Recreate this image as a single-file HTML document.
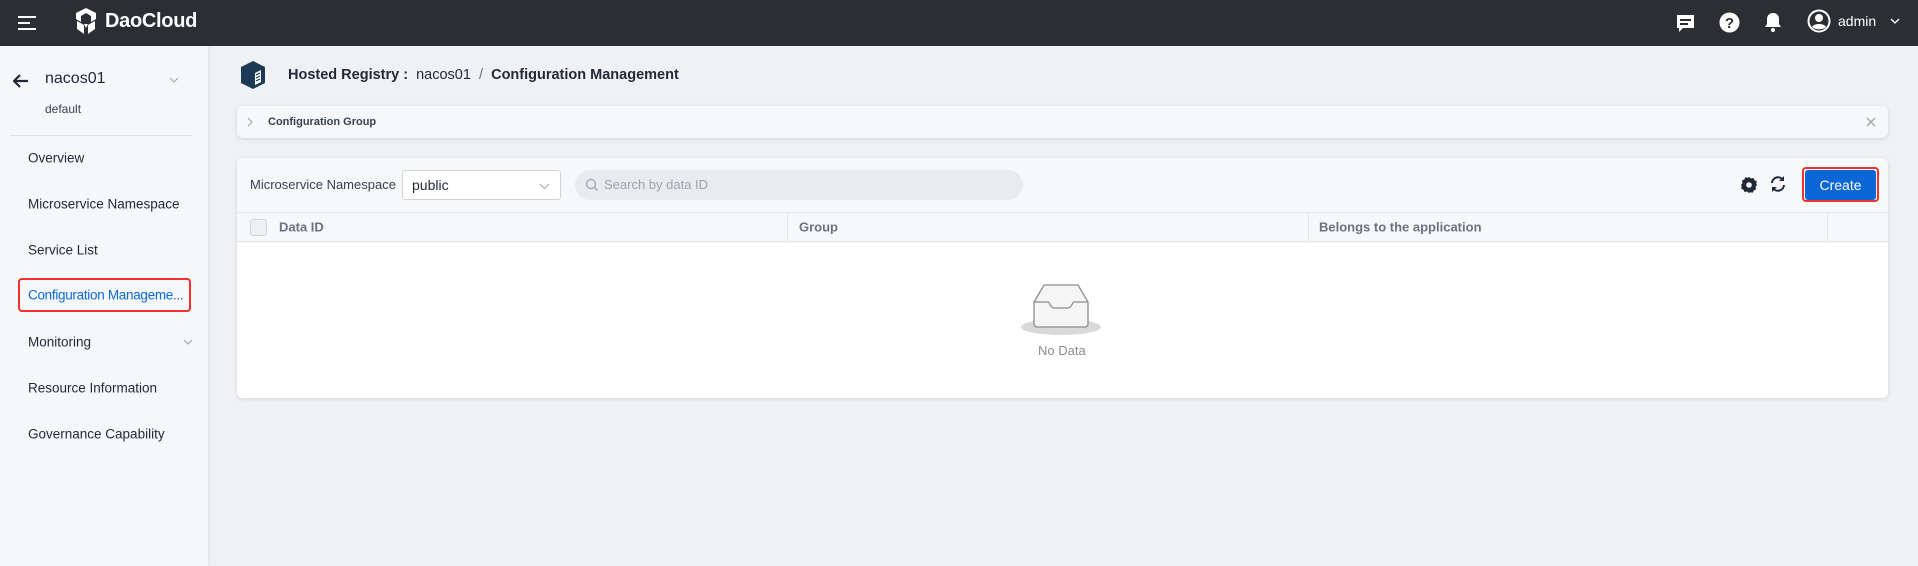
<!DOCTYPE html>
<html><head><meta charset="utf-8"><style>
*{box-sizing:border-box;margin:0;padding:0}
body{width:1918px;height:566px;overflow:hidden;background:#eff1f5;font-family:"Liberation Sans",sans-serif;position:relative;color:#1f2937}
.abs{position:absolute}
.top{left:0;top:0;width:1918px;height:46px;background:#2b2e33}
.side{left:0;top:46px;width:208px;height:520px;background:#f5f7fa;box-shadow:1px 0 3px rgba(0,0,0,.08)}
.mi{position:absolute;left:28px;font-size:13.5px;color:#1f2937;transform:translateY(-50%);white-space:nowrap}
.card{background:#f7f8fa;border-radius:6px;box-shadow:0 1px 4px rgba(0,0,0,.12)}
.th{position:absolute;top:227px;transform:translateY(-50%);font-size:13px;color:#6b7280;font-weight:bold}
</style></head><body>
<div class="abs top">
  <svg class="abs" style="left:18px;top:15px" width="20" height="16"><path d="M0 2h18M0 8h12M0 14h18" stroke="#fff" stroke-width="2"/></svg>
  <svg class="abs" style="left:71px;top:7px" width="30" height="28" viewBox="0 0 24 28"><path d="M12 1 2 6v6l5 3V9l5-3 5 3v6l5-3V6z M3 14l7 4v9l-7-5z M21 14l-7 4v9l7-5z" fill="#fff"/><path d="M10 17l2 4 2-4z" fill="#fff"/></svg>
  <div class="abs" style="left:105px;top:10px;font-size:20px;font-weight:bold;color:#fff;letter-spacing:-0.3px">DaoCloud</div>
  <svg class="abs" style="left:1675px;top:13px" width="21" height="21"><path d="M2 2h17v13H8l-4 4v-4H2z" fill="#fff"/><path d="M5 7h11M5 11h8" stroke="#2b2e33" stroke-width="2"/></svg>
  <svg class="abs" style="left:1719px;top:12px" width="21" height="21"><circle cx="10.5" cy="10.5" r="10" fill="#fff"/><text x="10.5" y="16" text-anchor="middle" font-size="15" font-weight="bold" fill="#2b2e33" font-family="Liberation Sans">?</text></svg>
  <svg class="abs" style="left:1763px;top:11px" width="20" height="22"><path d="M10 2c-4 0-6 3-6 6v5l-2 3h16l-2-3V8c0-3-2-6-6-6z" fill="#fff"/><circle cx="10" cy="19" r="2" fill="#fff"/></svg>
  <svg class="abs" style="left:1807px;top:9px" width="24" height="24"><circle cx="12" cy="12" r="10.5" fill="none" stroke="#fff" stroke-width="2"/><circle cx="12" cy="9" r="4" fill="#fff"/><path d="M5 18c2-4 12-4 14 0-3 3-11 3-14 0z" fill="#fff"/></svg>
  <div class="abs" style="left:1838px;top:13px;font-size:14px;color:#fff">admin</div>
  <svg class="abs" style="left:1890px;top:17px" width="10" height="8"><path d="M1 2l4 4 4-4" stroke="#fff" fill="none" stroke-width="1.3"/></svg>
</div>
<div class="abs side">
  <svg class="abs" style="left:13px;top:28px" width="16" height="14"><path d="M15 7H2M7 1 1 7l6 6" stroke="#1f2937" stroke-width="2.2" fill="none"/></svg>
  <div class="abs" style="left:45px;top:24px;font-size:16px">nacos01</div>
  <svg class="abs" style="left:169px;top:31px" width="10" height="7"><path d="M1 1l4 4 4-4" stroke="#9ca3af" fill="none"/></svg>
  <div class="abs" style="left:45px;top:56px;font-size:12px;color:#374151">default</div>
  <div class="abs" style="left:10px;top:89px;width:182px;height:1px;background:#dde1e6"></div>
  <div class="mi" style="top:112px">Overview</div>
  <div class="mi" style="top:158px">Microservice Namespace</div>
  <div class="mi" style="top:204px">Service List</div>
  <div class="abs" style="left:18px;top:232px;width:173px;height:34px;border:2px solid #f2312a;border-radius:4px"></div>
  <div class="mi" style="top:249px;color:#0b6bd6;letter-spacing:-0.3px">Configuration Manageme...</div>
  <div class="mi" style="top:296px">Monitoring</div>
  <svg class="abs" style="left:183px;top:293px" width="10" height="7"><path d="M1 1l4 4 4-4" stroke="#9ca3af" fill="none"/></svg>
  <div class="mi" style="top:342px">Resource Information</div>
  <div class="mi" style="top:388px">Governance Capability</div>
</div>
<svg class="abs" style="left:240px;top:61px" width="26" height="28" viewBox="0 0 26 28"><path d="M13 0 25 6v16l-12 6L1 22V6z" fill="#1c3a55"/><path d="M15 12l6-3v12l-6 3z" fill="#fff"/><path d="M16 14l4-2M16 17l4-2M16 20l4-2" stroke="#1c3a55" stroke-width="1.2"/></svg>
<div class="abs" style="left:288px;top:67px;font-size:14.5px"><b>Hosted Registry :</b>&nbsp; nacos01 &nbsp;<span style="color:#6b7280">/</span>&nbsp; <b>Configuration Management</b></div>
<div class="abs card" style="left:237px;top:106px;width:1651px;height:32px">
  <svg class="abs" style="left:10px;top:11px" width="7" height="10"><path d="M1 1l4 4-4 4" stroke="#9ca3af" fill="none"/></svg>
  <div class="abs" style="left:31px;top:10px;font-size:11px;font-weight:bold;color:#374151">Configuration Group</div>
  <svg class="abs" style="left:1629px;top:11px" width="10" height="10"><path d="M1 1l8 8M9 1 1 9" stroke="#9ca3af" stroke-width="1.3"/></svg>
</div>
<div class="abs card" style="left:237px;top:158px;width:1651px;height:240px;overflow:hidden">
  <div class="abs" style="left:13px;top:19px;font-size:13px;color:#374151">Microservice Namespace</div>
  <div class="abs" style="left:165px;top:12px;width:159px;height:30px;background:#fff;border:1px solid #cfd4da;border-radius:3px"><span class="abs" style="left:9px;top:6px;font-size:14px">public</span><svg class="abs" style="left:136px;top:12px" width="11" height="7"><path d="M1 1l4.5 4.5L10 1" stroke="#9ca3af" fill="none"/></svg></div>
  <div class="abs" style="left:338px;top:12px;width:448px;height:30px;background:#e9ebef;border-radius:15px"><svg class="abs" style="left:10px;top:8px" width="14" height="14"><circle cx="6" cy="6" r="4.5" stroke="#9ca3af" fill="none" stroke-width="1.3"/><path d="M9.5 9.5l3 3" stroke="#9ca3af" stroke-width="1.3"/></svg><span class="abs" style="left:29px;top:7px;font-size:13px;color:#9ca3af">Search by data ID</span></div>
  <svg class="abs" style="left:1503px;top:18px" width="18" height="18" viewBox="0 0 18 18"><path d="M9 1l2 1.5 2.5-.5 1 2.3 2.3 1-.5 2.5L17 9l-1.5 2 .5 2.5-2.3 1-1 2.3-2.5-.5L9 17l-2-1.5-2.5.5-1-2.3-2.3-1 .5-2.5L1 9l1.5-2L2 4.5l2.3-1 1-2.3 2.5.5z" fill="#1f2937"/><circle cx="9" cy="9" r="2.8" fill="#f7f8fa"/></svg>
  <svg class="abs" style="left:1532px;top:17px" width="18" height="18" viewBox="0 0 18 18"><path d="M3 8a6 6 0 0 1 11-3M15 10a6 6 0 0 1-11 3" stroke="#1f2937" stroke-width="2" fill="none"/><path d="M15 1v5h-5zM3 17v-5h5z" fill="#1f2937"/></svg>
  <div class="abs" style="left:1565px;top:9px;width:77px;height:35px;border:2px solid #f2312a;border-radius:4px"></div>
  <div class="abs" style="left:1568px;top:12px;width:71px;height:30px;background:#0b66d6;border-radius:3px;color:#fff;font-size:14px;text-align:center;line-height:30px">Create</div>
  <div class="abs" style="left:0;top:54px;width:1651px;height:30px;background:#f7f8fa;border-top:1px solid #e2e5ea;border-bottom:1px solid #e2e5ea"></div>
  <div class="abs" style="left:550px;top:55px;width:1px;height:29px;background:#e2e5ea"></div>
  <div class="abs" style="left:1071px;top:55px;width:1px;height:29px;background:#e2e5ea"></div>
  <div class="abs" style="left:1590px;top:55px;width:1px;height:29px;background:#e2e5ea"></div>
  <div class="abs" style="left:0;top:85px;width:1651px;height:160px;background:#fff"></div>
</div>
<div class="abs" style="left:250px;top:219px;width:17px;height:17px;border:1px solid #cfd4da;border-radius:3px;background:#eef0f3"></div>
<div class="th" style="left:279px">Data ID</div>
<div class="th" style="left:799px">Group</div>
<div class="th" style="left:1319px">Belongs to the application</div>
<svg class="abs" style="left:1020px;top:282px" width="82" height="54" viewBox="0 0 82 54"><ellipse cx="41" cy="45" rx="40" ry="8" fill="#d9d9d9"/><path d="M14 20 24 3h34l10 17v22a3 3 0 0 1-3 3H17a3 3 0 0 1-3-3z" fill="#f5f5f5" stroke="#8c8c8c" stroke-width="1.3"/><path d="M14 20h14c2 0 2 6 6 6h14c4 0 4-6 6-6h14" fill="none" stroke="#8c8c8c" stroke-width="1.3"/></svg>
<div class="abs" style="left:1038px;top:343px;font-size:13px;color:#8c8c8c">No Data</div>
</body></html>
